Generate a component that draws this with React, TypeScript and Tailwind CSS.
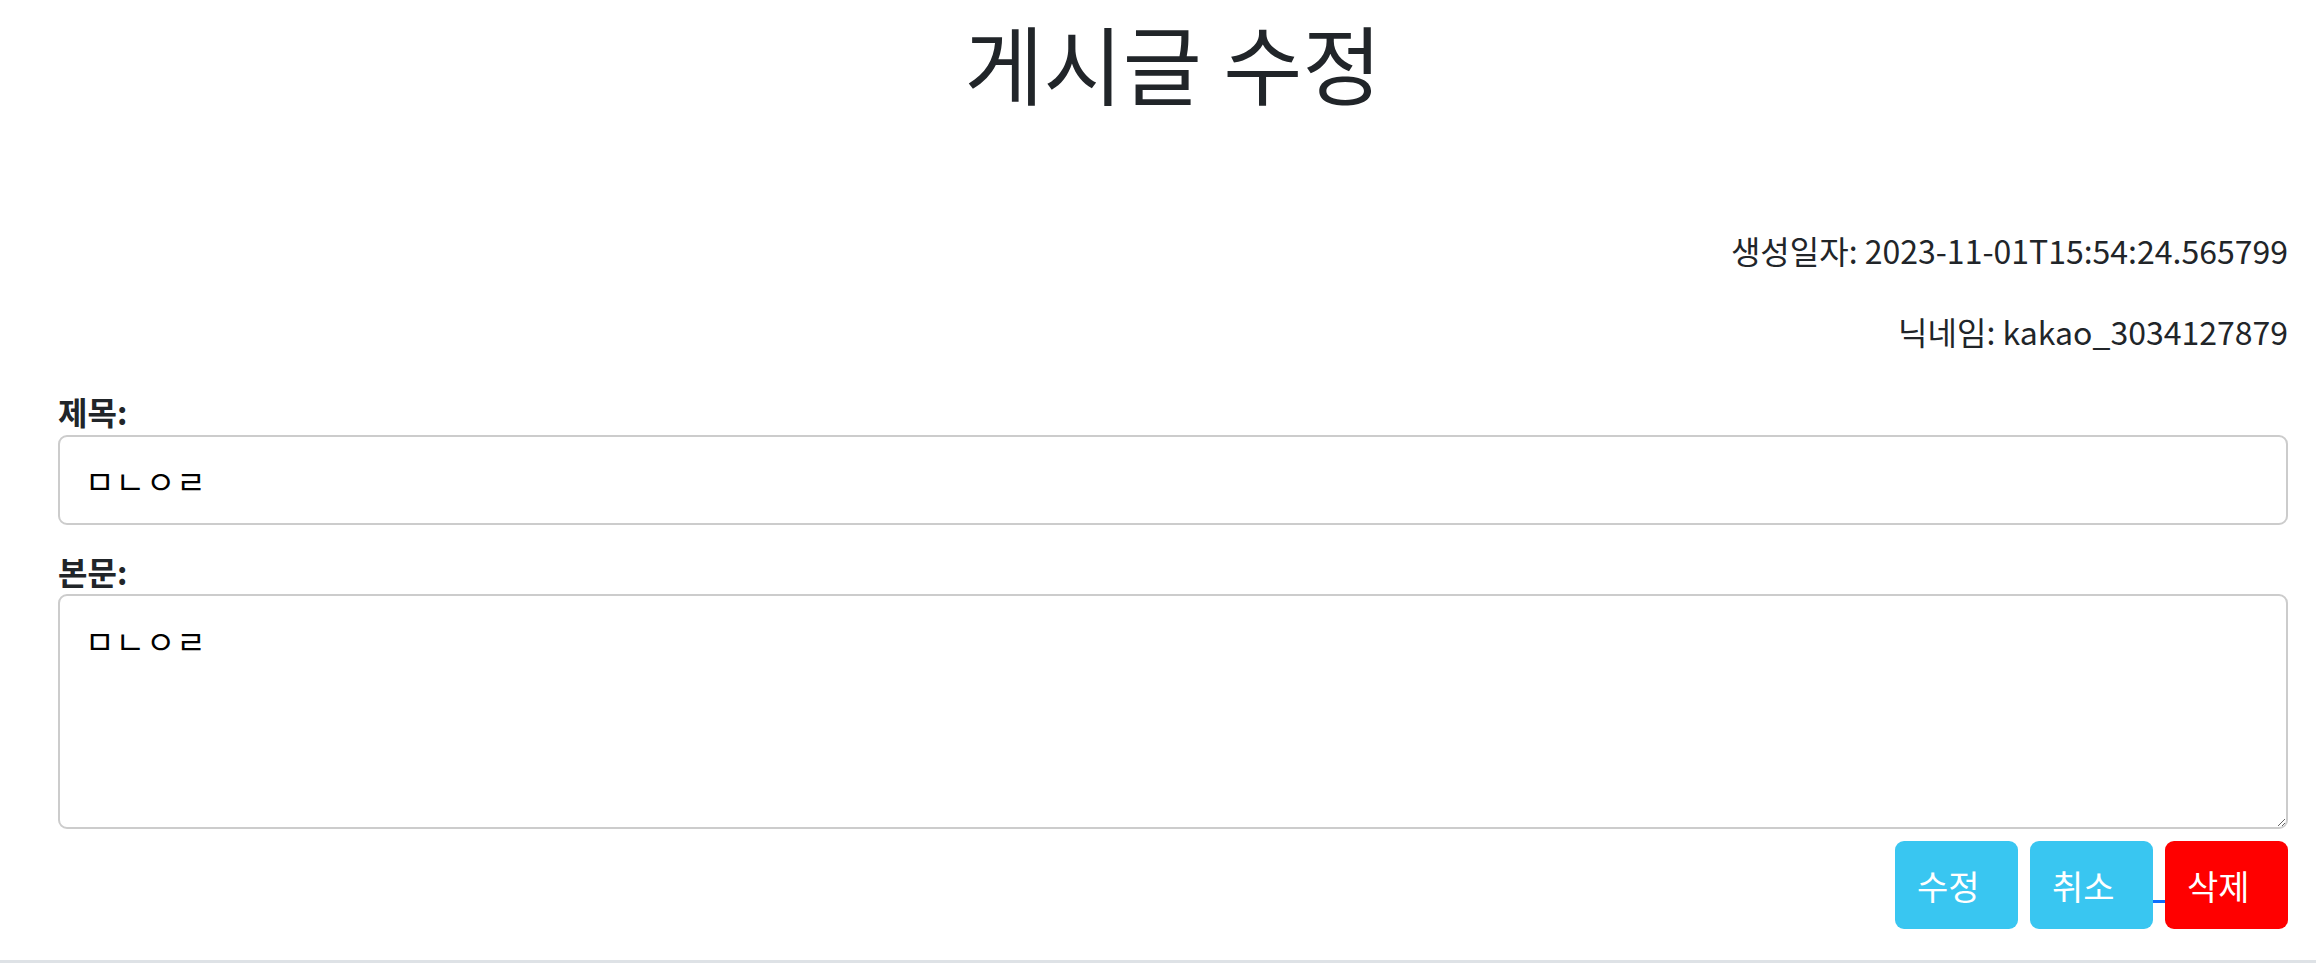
import React from "react";

export default function App() {
  const font = { fontFamily: '"Noto Sans CJK KR", "Noto Sans", sans-serif' };
  return (
    <div
      className="w-full min-h-[963px] bg-white text-[#212529]"
      style={font}
    >
      <div className="pl-[58px] pr-[28px]">
        <div className="h-[227px] pt-[20px]">
          <h1
            className="text-center text-[86px] leading-[100px] font-normal text-[#212529]"
            style={{ fontFamily: '"Liberation Serif", "Noto Sans CJK KR", serif' }}
          >
            게시글 수정
          </h1>
        </div>
        <div className="text-right text-[32px] leading-[46px] h-[46px]">
          생성일자: 2023-11-01T15:54:24.565799
        </div>
        <div className="mt-[35px] text-right text-[32px] leading-[46px] h-[46px]">
          닉네임: kakao_3034127879
        </div>
        <div className="mt-[36px] h-[42px] text-[32px] leading-[42px] font-bold">
          제목:
        </div>
        <input
          readOnly
          defaultValue="ㅁㄴㅇㄹ"
          className="mt-[3px] block w-full h-[90px] border-2 border-[#cccccc] rounded-[9px] pl-[25px] text-[32px] tracking-[1px] text-black outline-none"
          style={font}
        />
        <div className="mt-[25px] h-[42px] text-[32px] leading-[42px] font-bold">
          본문:
        </div>
        <textarea
          readOnly
          defaultValue="ㅁㄴㅇㄹ"
          className="mt-[2px] block w-full h-[235px] border-2 border-[#cccccc] rounded-[9px] pl-[25px] pt-[22px] text-[32px] tracking-[1px] leading-[44px] text-black outline-none"
          style={font}
        />
        <div className="mt-[12px] flex justify-end items-start h-[88px]">
          <button className="w-[123px] h-[88px] rounded-[9px] bg-[#39c6f1] text-white text-[34px] text-left pl-[22px]">
            수정
          </button>
          <div className="w-[12px]" />
          <button className="w-[123px] h-[88px] rounded-[9px] bg-[#39c6f1] text-white text-[34px] text-left pl-[22px]">
            취소
          </button>
          <div className="w-[12px] h-[3px] mt-[59px] bg-[#0d6efd]" />
          <button className="w-[123px] h-[88px] rounded-[9px] bg-[#ff0000] text-white text-[34px] text-left pl-[22px]">
            삭제
          </button>
        </div>
      </div>
      <div className="mt-[31px] border-t-[3px] border-[#dee2e6]" />
    </div>
  );
}
